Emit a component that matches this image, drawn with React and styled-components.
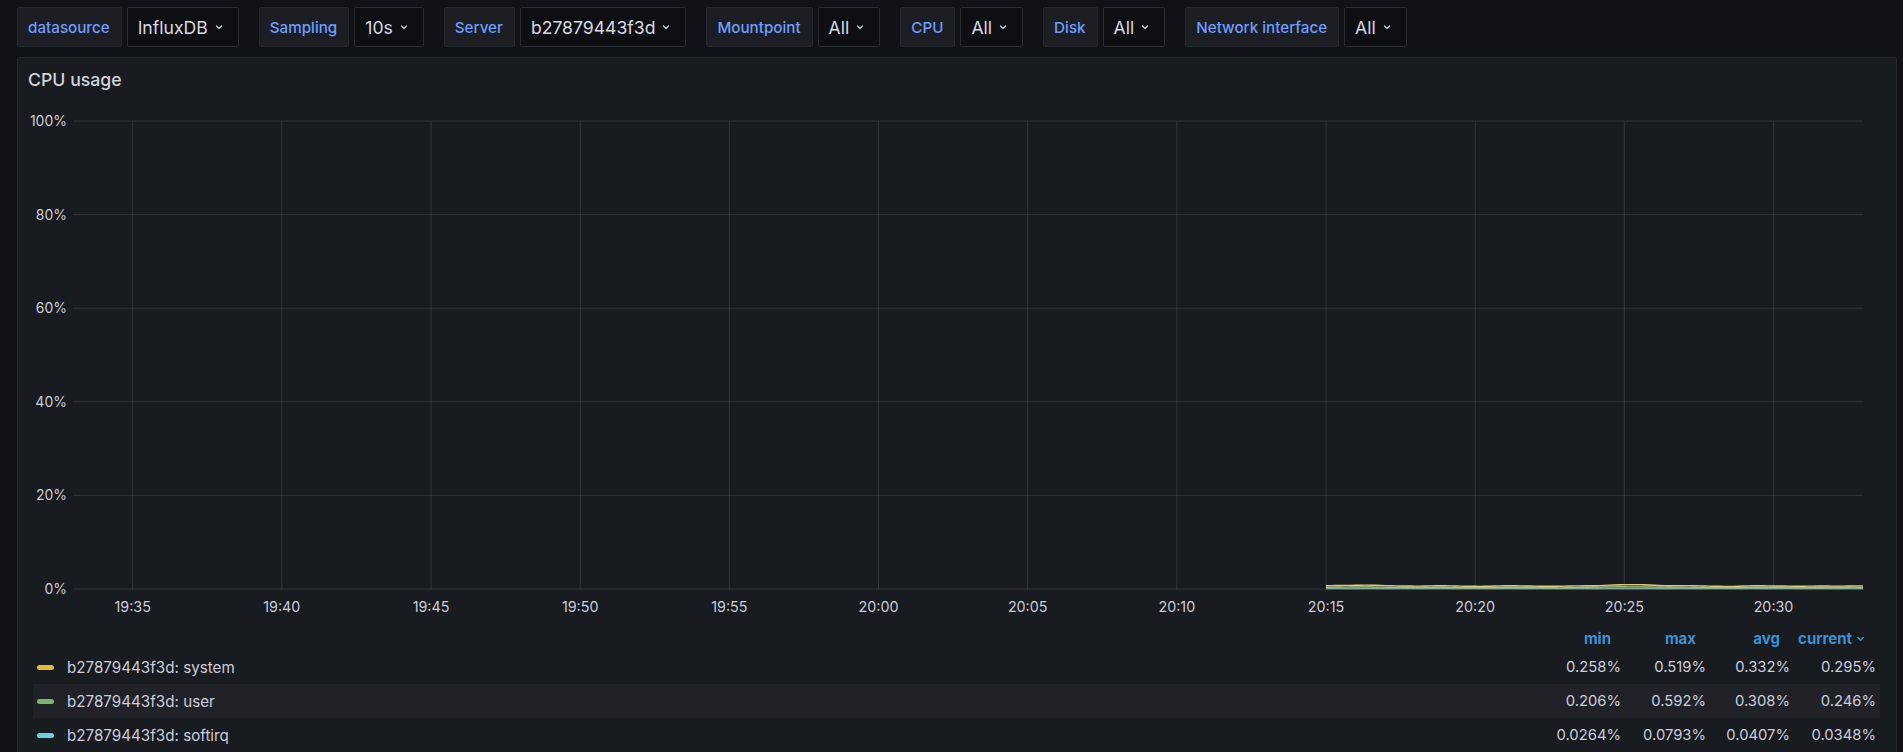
import React from 'react';
import styled, { createGlobalStyle } from 'styled-components';

const GlobalStyle = createGlobalStyle`
  html, body {
    margin: 0;
    padding: 0;
    background: #111217;
    overflow: hidden;
  }
  body {
    font-family: Inter, "Noto Sans", sans-serif;
    color: #ccccdc;
  }
`;

const VARIABLES = [
  { label: 'datasource', value: 'InfluxDB' },
  { label: 'Sampling', value: '10s' },
  { label: 'Server', value: 'b27879443f3d' },
  { label: 'Mountpoint', value: 'All' },
  { label: 'CPU', value: 'All' },
  { label: 'Disk', value: 'All' },
  { label: 'Network interface', value: 'All' },
];

const SERIES = [
  { name: 'b27879443f3d: system', color: '#EAB839', min: '0.258%', max: '0.519%', avg: '0.332%', current: '0.295%' },
  { name: 'b27879443f3d: user', color: '#7EB26D', min: '0.206%', max: '0.592%', avg: '0.308%', current: '0.246%' },
  { name: 'b27879443f3d: softirq', color: '#6ED0E0', min: '0.0264%', max: '0.0793%', avg: '0.0407%', current: '0.0348%' },
];

// chart geometry, in svg coords
const W = 1877;
const H = 526;
const PL = 55;
const PR = 1845;
const PT = 21;
const PB = 489;

const xAt = (min) => PL + (min * (PR - PL)) / 60;
const yAt = (pct) => PB - (pct / 100) * (PB - PT);

const TIME_TICKS = ['19:35', '19:40', '19:45', '19:50', '19:55', '20:00', '20:05', '20:10', '20:15', '20:20', '20:25', '20:30'];

// fake samples every 10s from 20:15 to 20:33
const samples = Array.from({ length: 109 }, (_, i) => {
  const bump = Math.exp(-((i - 62) ** 2) / 40) * 0.2 + Math.exp(-((i - 8) ** 2) / 30) * 0.12;
  return {
    m: 42 + i / 6,
    softirq: 0.04 + 0.01 * Math.sin(i * 0.9),
    user: 0.28 + 0.04 * Math.sin(i * 0.37) + bump,
    system: 0.31 + 0.03 * Math.cos(i * 0.51) + bump * 0.6,
  };
});

const stackLine = (keys) =>
  samples
    .map((s, i) => {
      const v = keys.reduce((acc, k) => acc + s[k], 0);
      return `${i ? 'L' : 'M'}${xAt(s.m).toFixed(1)} ${yAt(v).toFixed(2)}`;
    })
    .join(' ');

const stackArea = (keys) => `${stackLine(keys)} L${xAt(60)} ${PB} L${xAt(42)} ${PB} Z`;

const Page = styled.div`
  padding: 7px 8px 0 17px;
`;

const Toolbar = styled.div`
  display: flex;
  gap: 20px;
  height: 40px;
`;

const Variable = styled.div`
  display: flex;
  gap: 5px;
`;

const VarLabel = styled.div`
  display: flex;
  align-items: center;
  padding: 0 11px 0 10px;
  background: #1c1e23;
  border: 1px solid #26282e;
  border-radius: 2px;
  color: #6e9fff;
  font-size: 15.2px;
  font-weight: 500;
`;

const VarValue = styled.div`
  display: flex;
  align-items: center;
  gap: 6px;
  padding: 0 14px 0 10px;
  background: #0e0f13;
  border: 1px solid #2a2c32;
  border-radius: 2px;
  color: #d8d9e0;
  font-size: 17.6px;
`;

const Panel = styled.section`
  margin-top: 10px;
  width: 1878px;
  background: #181b1f;
  border: 1px solid #25272d;
  border-radius: 2px;
  padding-bottom: 40px;
`;

const PanelHeader = styled.div`
  height: 42px;
  display: flex;
  align-items: center;
  padding-left: 10px;
  font-size: 17.7px;
  font-weight: 500;
  color: #d2d3dc;
`;

const ChartSvg = styled.svg`
  display: block;
  font-family: Inter, "Noto Sans", sans-serif;
`;

const Legend = styled.table`
  margin: 0 15px 0 15px;
  width: 1847px;
  border-collapse: collapse;
  table-layout: fixed;
`;

const Th = styled.th`
  box-sizing: border-box;
  height: 24px;
  padding: 0 14px 0 0;
  text-align: right;
  font-size: 15px;
  font-weight: 700;
  color: #3d91d5;
  white-space: nowrap;
`;

const HeadInner = styled.span`
  display: inline-flex;
  align-items: center;
  gap: 3px;
`;

const Row = styled.tr`
  height: 34px;
  background: ${(p) => (p.$striped ? '#202227' : 'transparent')};
`;

const NameCell = styled.td`
  padding-left: 4px;
`;

const NameWrap = styled.div`
  display: flex;
  align-items: center;
  gap: 13px;
  color: #ccccdc;
  font-size: 15.2px;
`;

const Marker = styled.span`
  width: 17px;
  height: 5px;
  border-radius: 3px;
  background: ${(p) => p.$color};
`;

const ValueCell = styled.td`
  box-sizing: border-box;
  padding-right: 4px;
  text-align: right;
  color: #ccccdc;
  font-size: 14.8px;
  white-space: nowrap;
`;

const Chevron = ({ size = 10, color = '#ccccdc' }) => (
  <svg width={size} height={size} viewBox="0 0 10 10" fill="none">
    <path d="M2.5 4L5 6.5L7.5 4" stroke={color} strokeWidth="1.3" strokeLinecap="round" strokeLinejoin="round" />
  </svg>
);

function Chart() {
  const grid = 'rgba(204,204,220,0.14)';
  return (
    <ChartSvg width={W} height={H}>
      {[0, 20, 40, 60, 80, 100].map((v) => (
        <g key={v}>
          <line x1={PL} x2={PR} y1={yAt(v)} y2={yAt(v)} stroke={grid} />
          <text x={49} y={yAt(v)} dy="5" textAnchor="end" fontSize="14" fill="#ccccdc">
            {v}%
          </text>
        </g>
      ))}
      {TIME_TICKS.map((t, i) => {
        const x = xAt(2 + i * 5);
        return (
          <g key={t}>
            <line x1={x} x2={x} y1={PT} y2={PB} stroke={grid} />
            <text x={x} y={512} textAnchor="middle" fontSize="14.3" fill="#ccccdc">
              {t}
            </text>
          </g>
        );
      })}
      <path d={stackArea(['softirq', 'user', 'system'])} fill="#d9cf7a" fillOpacity="0.25" />
      <path d={stackArea(['softirq', 'user'])} fill="#a9bf78" fillOpacity="0.3" />
      <path d={stackLine(['softirq'])} stroke="#8fc9b8" strokeWidth="1" fill="none" />
      <path d={stackLine(['softirq', 'user'])} stroke="#a8bb78" strokeWidth="1.2" fill="none" />
      <path d={stackLine(['softirq', 'user', 'system'])} stroke="#d6cc7e" strokeWidth="1.4" fill="none" />
    </ChartSvg>
  );
}

export default function App() {
  return (
    <Page>
      <GlobalStyle />
      <Toolbar>
        {VARIABLES.map((v) => (
          <Variable key={v.label}>
            <VarLabel>{v.label}</VarLabel>
            <VarValue>
              {v.value}
              <Chevron />
            </VarValue>
          </Variable>
        ))}
      </Toolbar>
      <Panel>
        <PanelHeader>CPU usage</PanelHeader>
        <Chart />
        <Legend>
          <colgroup>
            <col />
            <col style={{ width: 85 }} />
            <col style={{ width: 85 }} />
            <col style={{ width: 84 }} />
            <col style={{ width: 86 }} />
          </colgroup>
          <thead>
            <tr>
              <Th />
              <Th>min</Th>
              <Th>max</Th>
              <Th>avg</Th>
              <Th>
                <HeadInner>
                  current <Chevron size={11} color="#3d91d5" />
                </HeadInner>
              </Th>
            </tr>
          </thead>
          <tbody>
            {SERIES.map((s, i) => (
              <Row key={s.name} $striped={i % 2 === 1}>
                <NameCell>
                  <NameWrap>
                    <Marker $color={s.color} />
                    {s.name}
                  </NameWrap>
                </NameCell>
                <ValueCell>{s.min}</ValueCell>
                <ValueCell>{s.max}</ValueCell>
                <ValueCell>{s.avg}</ValueCell>
                <ValueCell>{s.current}</ValueCell>
              </Row>
            ))}
          </tbody>
        </Legend>
      </Panel>
    </Page>
  );
}
